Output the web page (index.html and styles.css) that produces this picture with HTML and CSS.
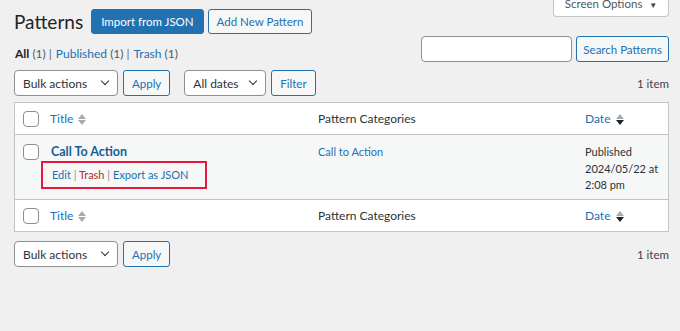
FILE: index.html
```html
<!DOCTYPE html>
<html lang="en">
<head>
  <meta charset="UTF-8">
  <title>Patterns</title>
  <link rel="stylesheet" href="styles.css">
</head>
<body>

  <div class="wrap">
    <div class="page-head">
      <h1>Patterns</h1>
      <button class="btn primary">Import from JSON</button>
      <button class="btn">Add New Pattern</button>
      <div class="screen-options">Screen Options <span class="caret">&#9660;</span></div>
    </div>

    <div class="filters-row">
      <ul class="subsubsub">
        <li><b>All</b> <span class="count">(1)</span> |</li>
        <li><a href="#">Published</a> <span class="count">(1)</span> |</li>
        <li><a href="#">Trash</a> <span class="count">(1)</span></li>
      </ul>
      <div class="search-box">
        <input type="search" class="search-input">
        <button class="btn">Search Patterns</button>
      </div>
    </div>

    <div class="tablenav">
      <div class="select wide">Bulk actions <span class="chev"></span></div>
      <button class="btn">Apply</button>
      <div class="select dates">All dates <span class="chev"></span></div>
      <button class="btn">Filter</button>
      <span class="num-items">1 item</span>
    </div>

    <table class="list-table">
      <thead>
        <tr>
          <th class="check"><span class="box"></span></th>
          <th class="col-title"><a href="#">Title</a> <span class="sort"><i class="up"></i><i class="down"></i></span></th>
          <th class="col-cats">Pattern Categories</th>
          <th class="col-date"><a href="#">Date</a> <span class="sort sorted"><i class="up"></i><i class="down"></i></span></th>
        </tr>
      </thead>
      <tbody>
        <tr class="alt">
          <td class="check"><span class="box"></span></td>
          <td class="col-title">
            <a href="#" class="row-title">Call To Action</a>
            <div class="row-actions">
              <a href="#">Edit</a> | <a href="#" class="trash">Trash</a> | <a href="#">Export as JSON</a>
            </div>
          </td>
          <td class="col-cats"><a href="#">Call to Action</a></td>
          <td class="col-date">Published<br>2024/05/22 at<br>2:08 pm</td>
        </tr>
      </tbody>
      <tfoot>
        <tr>
          <th class="check"><span class="box"></span></th>
          <th class="col-title"><a href="#">Title</a> <span class="sort"><i class="up"></i><i class="down"></i></span></th>
          <th class="col-cats">Pattern Categories</th>
          <th class="col-date"><a href="#">Date</a> <span class="sort sorted"><i class="up"></i><i class="down"></i></span></th>
        </tr>
      </tfoot>
    </table>

    <div class="tablenav bottom">
      <div class="select wide">Bulk actions <span class="chev"></span></div>
      <button class="btn">Apply</button>
      <span class="num-items">1 item</span>
    </div>
  </div>

</body>
</html>
```

FILE: styles.css
```css
body {
  margin: 0;
  background: #f0f0f1;
  color: #3c434a;
  font-family: Lato, "Noto Sans", sans-serif;
  font-size: 11.5px;
}

a {
  color: #2271b1;
  text-decoration: none;
}

.wrap {
  padding: 0 11px 0 14px;
}

.page-head {
  display: flex;
  align-items: flex-start;
  gap: 4px;
  padding-top: 9px;
}

h1 {
  margin: 0 4px 0 0;
  font-size: 19px;
  font-weight: 400;
  line-height: 25px;
  color: #1d2327;
}

.btn {
  height: 25px;
  padding: 0 8px;
  font-family: inherit;
  font-size: 11.5px;
  border: 1px solid #2271b1;
  border-radius: 3px;
  background: #f6f7f7;
  color: #2271b1;
}

.btn.primary {
  padding: 0 9px;
  background: #2271b1;
  color: #fff;
}

.screen-options {
  margin: -9px 0 0 auto;
  width: 116px;
  height: 17px;
  box-sizing: border-box;
  line-height: 8px;
  text-align: center;
  background: #fff;
  border: 1px solid #c3c4c7;
  border-top: none;
  border-radius: 0 0 4px 4px;
  color: #50575e;
  font-size: 11.5px;
}

.caret {
  font-size: 8px;
  margin-left: 4px;
  color: #3c434a;
}

.filters-row {
  display: flex;
  justify-content: space-between;
  align-items: flex-end;
  margin-top: 2px;
}

.subsubsub {
  list-style: none;
  margin: 0 0 1px 1px;
  padding: 0;
  display: flex;
  gap: 4px;
  font-size: 12px;
  color: #646970;
}

.subsubsub b {
  color: #1d2327;
}

.count {
  color: #50575e;
}

.search-box {
  display: flex;
  gap: 4px;
}

.search-input {
  width: 151px;
  height: 26px;
  box-sizing: border-box;
  border: 1px solid #8c8f94;
  border-radius: 4px;
  background: #fff;
}

.search-box .btn {
  height: 26px;
  padding: 0 6px;
}

.tablenav {
  display: flex;
  align-items: center;
  gap: 5px;
  margin-top: 8px;
  height: 26px;
}

.select {
  position: relative;
  box-sizing: border-box;
  height: 26px;
  padding: 5px 0 0 8px;
  border: 1px solid #8c8f94;
  border-radius: 4px;
  background: #fff;
  font-size: 12px;
  color: #2c3338;
}

.select.wide {
  width: 104px;
}

.select.dates {
  width: 82px;
  margin-left: 9px;
}

.chev {
  position: absolute;
  right: 9px;
  top: 7px;
  width: 5px;
  height: 5px;
  border-right: 1.5px solid #2c3338;
  border-bottom: 1.5px solid #2c3338;
  transform: rotate(45deg);
}

.tablenav .btn {
  height: 26px;
}

.num-items {
  margin-left: auto;
  color: #3c434a;
}

.list-table {
  width: 100%;
  margin-top: 6px;
  border-collapse: collapse;
  background: #fff;
  border: 1px solid #c3c4c7;
}

.list-table th {
  text-align: left;
  font-weight: 400;
  font-size: 12px;
  color: #2c3338;
  height: 31px;
  padding: 0;
}

.list-table thead th {
  border-bottom: 1px solid #c3c4c7;
}

.list-table tfoot th {
  border-top: 1px solid #c3c4c7;
}

.list-table td {
  vertical-align: top;
  padding: 9px 0 0;
  height: 55px;
  font-size: 11px;
  line-height: 16.5px;
  white-space: nowrap;
}

tr.alt {
  background: #f6f7f7;
}

.check {
  width: 27px;
  padding-left: 8px !important;
}

.box {
  display: block;
  width: 14px;
  height: 14px;
  border: 1px solid #8c8f94;
  border-radius: 4px;
  background: #fff;
}

.col-title {
  width: 268px;
}

.col-cats {
  width: 267px;
}

.sort {
  display: inline-flex;
  flex-direction: column;
  gap: 1px;
  vertical-align: middle;
  margin-left: 2px;
}

.sort i {
  width: 0;
  height: 0;
  border-left: 4px solid transparent;
  border-right: 4px solid transparent;
}

.sort .up {
  border-bottom: 5px solid #a7aaad;
}

.sort .down {
  border-top: 5px solid #a7aaad;
}

.sort.sorted .down {
  border-top-color: #1d2327;
}

.row-title {
  font-size: 12.5px;
  font-weight: 700;
  color: #135e96;
  margin-left: 1px;
}

.row-actions {
  width: 166px;
  box-sizing: border-box;
  margin: 0 0 0 -9px;
  padding: 4px 9px;
  border: 2px solid #e8173c;
  color: #8c8f94;
  font-size: 11px;
}

.row-actions .trash {
  color: #b32d2e;
}

.col-date {
  color: #2c3338;
}

.tablenav.bottom {
  margin-top: 9px;
}
```
